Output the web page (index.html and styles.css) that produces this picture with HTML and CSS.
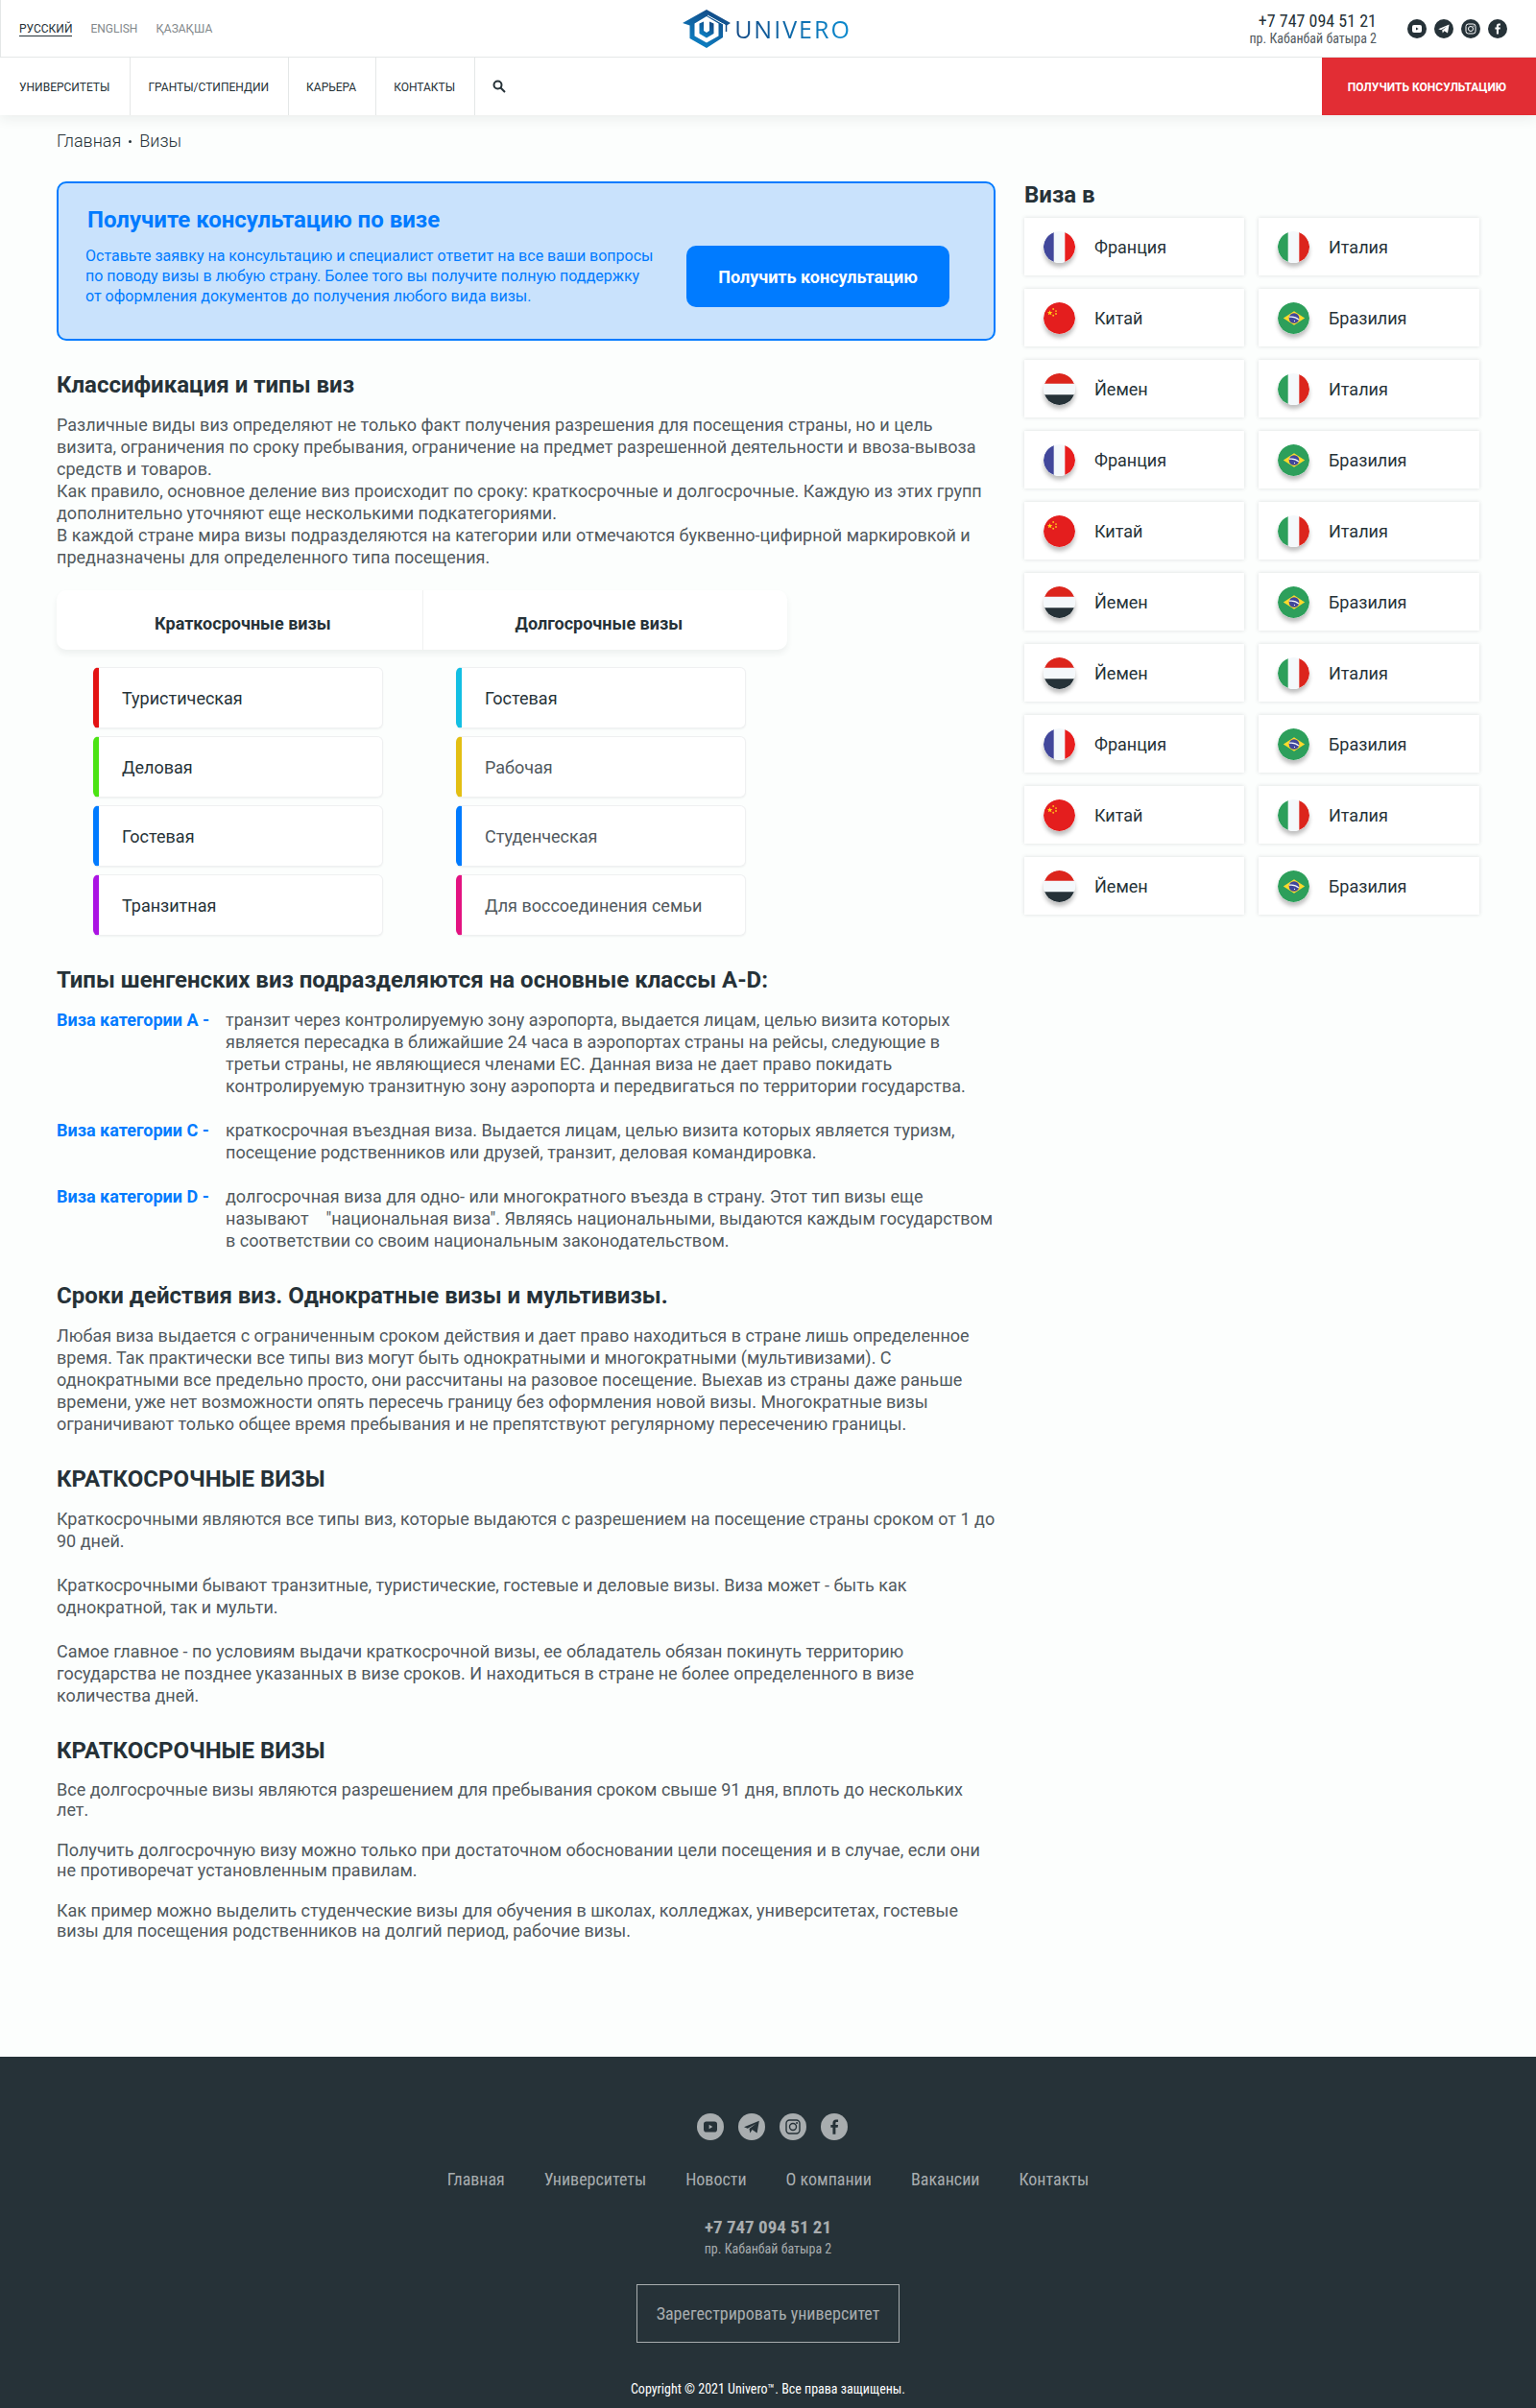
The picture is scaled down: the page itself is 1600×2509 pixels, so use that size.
FILE: index.html
```html
<!DOCTYPE html>
<html lang="ru">
<head>
<meta charset="utf-8">
<meta name="viewport" content="width=device-width, initial-scale=1">
<title>Визы — Univero</title>
<link rel="stylesheet" href="styles.css">
</head>
<body>
<svg class="defs" aria-hidden="true">
  <symbol id="youtube" viewBox="0 0 20 20"><rect x="5" y="6" width="10" height="8" rx="2"/><path class="hole" d="M9 8.4v3.2l2.7-1.6z"/></symbol>
  <symbol id="telegram" viewBox="0 0 20 20"><path d="M4.3 10.2 15.6 5.6 14 14.6 10.4 12.2 8.8 14.6 8.2 11.5 13.2 7.6 7 11.2z"/></symbol>
  <symbol id="instagram" viewBox="0 0 20 20"><rect class="line" x="5" y="5" width="10" height="10" rx="2.5"/><circle class="line" cx="10" cy="10" r="2.5"/><circle cx="12.9" cy="7.1" r=".7"/></symbol>
  <symbol id="facebook" viewBox="0 0 20 20"><path d="M8.9 15.5V10.6H7.4V8.6h1.5V7.2C8.9 5.5 9.8 4.6 11.4 4.6h1.5v1.9h-1c-.7 0-.9.3-.9.9v1.2h1.9l-.3 2H11v4.9z"/></symbol>
  <clipPath id="disc"><circle cx="17" cy="17" r="17"/></clipPath>
  <symbol id="fr" viewBox="0 0 34 34"><g clip-path="url(#disc)"><path fill="#f4f8fb" d="M0 0h34v34H0z"/><path fill="#41479b" d="M0 0h11v34H0z"/><path fill="#e81e1e" d="M23 0h11v34H23z"/></g></symbol>
  <symbol id="it" viewBox="0 0 34 34"><g clip-path="url(#disc)"><path fill="#f4f8fb" d="M0 0h34v34H0z"/><path fill="#2d9f5b" d="M0 0h11v34H0z"/><path fill="#dc251c" d="M23 0h11v34H23z"/></g></symbol>
  <symbol id="ye" viewBox="0 0 34 34"><g clip-path="url(#disc)"><path fill="#f4f8fb" d="M0 0h34v34H0z"/><path fill="#dc251c" d="M0 0h34v11H0z"/><path fill="#263238" d="M0 23h34v11H0z"/></g></symbol>
  <symbol id="cn" viewBox="0 0 34 34"><circle cx="17" cy="17" r="17" fill="#e41e1e"/><path fill="#ffd012" d="m6.800 8.400.8 1.900 2.100.1-1.600 1.300.5 2-1.800-1.100L5 13.700l.5-2-1.500-1.300 2-.1z"/><g fill="#ffb61e"><circle cx="10.500" cy="7.300" r="1"/><circle cx="13.400" cy="9.400" r="1"/><circle cx="13.400" cy="12.400" r="1"/><circle cx="10.500" cy="14.100" r="1"/></g></symbol>
  <symbol id="br" viewBox="0 0 34 34"><circle cx="17" cy="17" r="17" fill="#2d9f5b"/><path fill="#ffda2c" d="M17.500 9.500 29 17 17.500 24.500 6 17z"/><circle cx="17.500" cy="17" r="5.500" fill="#41479b"/><path fill="none" stroke="#f4f8fb" stroke-width="1.300" d="M12.300 15.700c3.700-.7 7.600.5 10.300 3"/><circle cx="18" cy="20" r=".6" fill="#fff"/></symbol>
</svg>

<header class="header">
  <div class="topbar">
    <nav class="langs" aria-label="Язык">
      <a class="lang lang-active" href="#">РУССКИЙ</a>
      <a class="lang" href="#">ENGLISH</a>
      <a class="lang" href="#">ҚАЗАҚША</a>
    </nav>
    <a class="logo" href="#" aria-label="Univero">
      <svg class="logo-mark" viewBox="0 0 50 42">
        <defs><linearGradient id="lg" x1="0" y1="1" x2=".6" y2="0"><stop offset="0" stop-color="#0a8bd0"/><stop offset="1" stop-color="#124a86"/></linearGradient></defs>
        <path fill="url(#lg)" d="M25 1 50 15 46 17.500 42 15.500V30L25 41 7.500 31V17.500L0 15zM25 8 12.500 15.500V28.500L25 35.500 37.500 28.500V15.500z"/>
        <path fill="url(#lg)" d="M17.500 15.500 22 13.500V23l3 2 3-2V13.500l4.500 2V26L25 30.500 17.500 26z"/>
        <path fill="none" stroke="#fff" stroke-width="1" d="M26 7 44 17"/>
        <path fill="none" stroke="#124a86" stroke-width="1.500" d="M45.500 16v8"/>
      </svg>
      <span class="logo-text">UNIVERO</span>
    </a>
    <div class="contacts">
      <address class="contact">
        <a class="phone" href="tel:+77470945121">+7 747 094 51 21</a>
        <span class="street">пр. Кабанбай батыра 2</span>
      </address>
      <div class="socials">
        <a class="social" href="#" aria-label="YouTube"><svg><use href="#youtube"/></svg></a>
        <a class="social" href="#" aria-label="Telegram"><svg><use href="#telegram"/></svg></a>
        <a class="social" href="#" aria-label="Instagram"><svg><use href="#instagram"/></svg></a>
        <a class="social" href="#" aria-label="Facebook"><svg><use href="#facebook"/></svg></a>
      </div>
    </div>
  </div>
  <nav class="menu" aria-label="Меню">
    <a class="menu-item" href="#">УНИВЕРСИТЕТЫ</a>
    <a class="menu-item" href="#">ГРАНТЫ/СТИПЕНДИИ</a>
    <a class="menu-item" href="#">КАРЬЕРА</a>
    <a class="menu-item" href="#">КОНТАКТЫ</a>
    <button class="search" type="button" aria-label="Поиск"><svg viewBox="0 0 14 14"><circle cx="5.500" cy="5.500" r="4" /><path d="m8.300 8.300 4.700 4.700"/></svg></button>
    <button class="menu-cta" type="button">ПОЛУЧИТЬ КОНСУЛЬТАЦИЮ</button>
  </nav>
</header>

<nav class="crumbs" aria-label="Навигация"><a href="#">Главная</a><span class="dot"></span><span>Визы</span></nav>

<div class="page">
  <main class="content">
    <section class="banner">
      <div>
        <h2 class="banner-title">Получите консультацию по визе</h2>
        <p class="banner-text">Оставьте заявку на консультацию и специалист ответит на все ваши вопросы по поводу визы в любую страну. Более того вы получите полную поддержку от оформления документов до получения любого вида визы.</p>
      </div>
      <button class="banner-btn" type="button">Получить консультацию</button>
    </section>

    <h2 class="title">Классификация и типы виз</h2>
    <div class="text">
      <p>Различные виды виз определяют не только факт получения разрешения для посещения страны, но и цель визита, ограничения по сроку пребывания, ограничение на предмет разрешенной деятельности и ввоза-вывоза средств и товаров.</p>
      <p>Как правило, основное деление виз происходит по сроку: краткосрочные и долгосрочные. Каждую из этих групп дополнительно уточняют еще несколькими подкатегориями.</p>
      <p>В каждой стране мира визы подразделяются на категории или отмечаются буквенно-цифирной маркировкой и предназначены для определенного типа посещения.</p>
    </div>

    <div class="types">
      <div class="types-head">
        <h3 class="types-title">Краткосрочные визы</h3>
        <h3 class="types-title">Долгосрочные визы</h3>
      </div>
      <div class="types-body">
        <ul class="types-list">
          <li class="type red">Туристическая</li>
          <li class="type green">Деловая</li>
          <li class="type blue">Гостевая</li>
          <li class="type purple">Транзитная</li>
        </ul>
        <ul class="types-list">
          <li class="type cyan">Гостевая</li>
          <li class="type yellow soft">Рабочая</li>
          <li class="type blue soft">Студенческая</li>
          <li class="type pink soft">Для воссоединения семьи</li>
        </ul>
      </div>
    </div>

    <h2 class="title">Типы шенгенских виз подразделяются на основные классы A-D:</h2>
    <dl class="classes">
      <dt>Виза категории A -</dt>
      <dd>транзит через контролируемую зону аэропорта, выдается лицам, целью визита которых является пересадка в ближайшие 24 часа в аэропортах страны на рейсы, следующие в третьи страны, не являющиеся членами ЕС. Данная виза не дает право покидать контролируемую транзитную зону аэропорта и передвигаться по территории государства.</dd>
      <dt>Виза категории C -</dt>
      <dd>краткосрочная въездная виза. Выдается лицам, целью визита которых является туризм, посещение родственников или друзей, транзит, деловая командировка.</dd>
      <dt>Виза категории D -</dt>
      <dd>долгосрочная виза для одно- или многократного въезда в страну. Этот тип визы еще называют &nbsp;&nbsp; "национальная виза". Являясь национальными, выдаются каждым государством в соответствии со своим национальным законодательством.</dd>
    </dl>

    <h2 class="title">Сроки действия виз. Однократные визы и мультивизы.</h2>
    <div class="text">
      <p>Любая виза выдается с ограниченным сроком действия и дает право находиться в стране лишь определенное время. Так практически все типы виз могут быть однократными и многократными (мультивизами). С однократными все предельно просто, они рассчитаны на разовое посещение. Выехав из страны даже раньше времени, уже нет возможности опять пересечь границу без оформления новой визы. Многократные визы ограничивают только общее время пребывания и не препятствуют регулярному пересечению границы.</p>
    </div>

    <h2 class="title">КРАТКОСРОЧНЫЕ ВИЗЫ</h2>
    <div class="text spaced">
      <p>Краткосрочными являются все типы виз, которые выдаются с разрешением на посещение страны сроком от 1 до 90 дней.</p>
      <p>Краткосрочными бывают транзитные, туристические, гостевые и деловые визы. Виза может - быть как однократной, так и мульти.</p>
      <p>Самое главное - по условиям выдачи краткосрочной визы, ее обладатель обязан покинуть территорию государства не позднее указанных в визе сроков. И находиться в стране не более определенного в визе количества дней.</p>
    </div>

    <h2 class="title">КРАТКОСРОЧНЫЕ ВИЗЫ</h2>
    <div class="text spaced tight">
      <p>Все долгосрочные визы являются разрешением для пребывания сроком свыше 91 дня, вплоть до нескольких лет.</p>
      <p>Получить долгосрочную визу можно только при достаточном обосновании цели посещения и в случае, если они не противоречат установленным правилам.</p>
      <p>Как пример можно выделить студенческие визы для обучения в школах, колледжах, университетах, гостевые визы для посещения родственников на долгий период, рабочие визы.</p>
    </div>
  </main>

  <aside class="aside">
    <h2 class="aside-title">Виза в</h2>
    <div class="countries">
      <a class="country" href="#"><svg class="flag"><use href="#fr"/></svg>Франция</a>
      <a class="country" href="#"><svg class="flag"><use href="#it"/></svg>Италия</a>
      <a class="country" href="#"><svg class="flag"><use href="#cn"/></svg>Китай</a>
      <a class="country" href="#"><svg class="flag"><use href="#br"/></svg>Бразилия</a>
      <a class="country" href="#"><svg class="flag"><use href="#ye"/></svg>Йемен</a>
      <a class="country" href="#"><svg class="flag"><use href="#it"/></svg>Италия</a>
      <a class="country" href="#"><svg class="flag"><use href="#fr"/></svg>Франция</a>
      <a class="country" href="#"><svg class="flag"><use href="#br"/></svg>Бразилия</a>
      <a class="country" href="#"><svg class="flag"><use href="#cn"/></svg>Китай</a>
      <a class="country" href="#"><svg class="flag"><use href="#it"/></svg>Италия</a>
      <a class="country" href="#"><svg class="flag"><use href="#ye"/></svg>Йемен</a>
      <a class="country" href="#"><svg class="flag"><use href="#br"/></svg>Бразилия</a>
      <a class="country" href="#"><svg class="flag"><use href="#ye"/></svg>Йемен</a>
      <a class="country" href="#"><svg class="flag"><use href="#it"/></svg>Италия</a>
      <a class="country" href="#"><svg class="flag"><use href="#fr"/></svg>Франция</a>
      <a class="country" href="#"><svg class="flag"><use href="#br"/></svg>Бразилия</a>
      <a class="country" href="#"><svg class="flag"><use href="#cn"/></svg>Китай</a>
      <a class="country" href="#"><svg class="flag"><use href="#it"/></svg>Италия</a>
      <a class="country" href="#"><svg class="flag"><use href="#ye"/></svg>Йемен</a>
      <a class="country" href="#"><svg class="flag"><use href="#br"/></svg>Бразилия</a>
    </div>
  </aside>
</div>

<footer class="footer">
  <div class="socials socials-footer">
    <a class="social" href="#" aria-label="YouTube"><svg><use href="#youtube"/></svg></a>
    <a class="social" href="#" aria-label="Telegram"><svg><use href="#telegram"/></svg></a>
    <a class="social" href="#" aria-label="Instagram"><svg><use href="#instagram"/></svg></a>
    <a class="social" href="#" aria-label="Facebook"><svg><use href="#facebook"/></svg></a>
  </div>
  <nav class="footer-nav" aria-label="Нижнее меню">
    <a href="#">Главная</a>
    <a href="#">Университеты</a>
    <a href="#">Новости</a>
    <a href="#">О компании</a>
    <a href="#">Вакансии</a>
    <a href="#">Контакты</a>
  </nav>
  <address class="footer-contact">
    <a class="footer-phone" href="tel:+77470945121">+7 747 094 51 21</a>
    <span class="footer-street">пр. Кабанбай батыра 2</span>
  </address>
  <button class="register" type="button">Зарегестрировать университет</button>
  <p class="copyright">Copyright © 2021 Univero™. Все права защищены.</p>
</footer>
</body>
</html>
```
FILE: styles.css
```css
* { box-sizing: border-box; }
body, h2, h3, p, ul, dl, dd { margin: 0; padding: 0; }
body {
  background: #fcfefd;
  color: #263238;
  font-family: Roboto, sans-serif;
  font-size: 18px;
}
a { color: inherit; text-decoration: none; }
button { border: 0; background: none; font: inherit; color: inherit; padding: 0; cursor: pointer; }
ul { list-style: none; }
address { font-style: normal; }
.defs { position: absolute; width: 0; height: 0; }

/* Header */
.header { position: relative; background: #fff; box-shadow: 0 4px 12px rgba(38, 50, 56, .08); }
.topbar {
  display: grid;
  grid-template-columns: 1fr auto 1fr;
  align-items: center;
  height: 60px;
  padding: 0 30px 0 19px;
  border-left: 1px solid #e4e7e7;
  border-bottom: 1px solid #e4e7e7;
}
.langs { display: flex; gap: 19px; padding-top: 2px; font-size: 12px; line-height: 14px; }
.lang { color: #82888b; border-bottom: 1px solid transparent; }
.lang-active { color: #263238; border-color: #263238; }
.logo { display: flex; align-items: center; gap: 4px; padding-left: 8px; }
.logo-mark { width: 50px; height: 42px; }
.logo-text {
  font-family: "Open Sans", sans-serif;
  font-size: 25px;
  line-height: 30px;
  letter-spacing: 2px;
  background: linear-gradient(90deg, #124a86, #0a8bd0);
  background-clip: text;
  color: transparent;
}
.contacts { display: flex; justify-content: flex-end; align-items: center; gap: 32px; }
.contact { display: flex; flex-direction: column; text-align: right; font-family: "Roboto Condensed", Roboto, sans-serif; }
.phone { font-size: 18px; line-height: 21px; }
.street { font-size: 14px; line-height: 16px; color: #51595e; }
.socials { display: flex; gap: 8px; --disc: #263238; --ink: #fff; }
.social { display: flex; width: 20px; height: 20px; border-radius: 50%; background: var(--disc); }
.social svg { width: 100%; height: 100%; fill: var(--ink); }
.hole { fill: var(--disc); }
.line { fill: none; stroke: var(--ink); stroke-width: 1; }

.menu { display: flex; height: 60px; font-size: 12px; }
.menu-item { display: flex; align-items: center; padding: 2px 20px 0 18px; border-right: 1px solid #e4e7e7; }
.menu-item:first-child { padding-left: 20px; padding-right: 21px; }
.search { width: 50px; display: flex; align-items: center; justify-content: center; }
.search svg { width: 14px; height: 14px; fill: none; stroke: #263238; stroke-width: 2; }
.menu-cta { width: 223px; margin-left: auto; padding: 2px 4px 0 0; background: #e22d34; color: #fff; font-weight: 700; }

.crumbs { display: flex; align-items: center; gap: 8px; padding: 16px 59px 0; line-height: 22px; font-weight: 300; }
.dot { width: 3px; height: 3px; border-radius: 50%; background: #263238; }

/* Page */
.page { display: grid; grid-template-columns: minmax(0, 978px) minmax(0, 476px); gap: 30px; padding: 31px 0 121px 59px; }
.banner {
  display: flex;
  align-items: flex-start;
  gap: 20px;
  padding: 24px 46px 33px 28px;
  border: 2px solid #007bff;
  border-radius: 10px;
  background: #c9e2fc;
  color: #007bff;
}
.banner-title { font-size: 24px; line-height: 28px; font-weight: 700; padding-left: 2px; }
.banner-text { width: 594px; margin-top: 13px; font-size: 16px; line-height: 21px; }
.banner-btn { width: 274px; height: 64px; margin: 41px 0 0 auto; flex: none; border-radius: 10px; background: #007bff; color: #fff; font-weight: 700; }

.title { margin: 31px 0 15px; font-size: 24px; line-height: 30px; font-weight: 700; }
.text, .classes { color: #51595e; line-height: 23px; }
.spaced { display: grid; gap: 23px; }
.tight { line-height: 21px; gap: 21px; }

.types { width: 761px; margin-top: 23px; }
.types-head { display: grid; grid-template-columns: 1fr 1fr; background: #fff; border-radius: 10px; box-shadow: 0 4px 6px rgba(38, 50, 56, .07); }
.types-title { padding: 24px 0 16px 102px; font-size: 18px; line-height: 22px; font-weight: 700; }
.types-title + .types-title { padding-left: 96px; border-left: 1px solid #f0f1f1; }
.types-body { display: grid; grid-template-columns: 378px 1fr; padding-top: 18px; }
.types-list { display: grid; gap: 8px; padding-left: 38px; }
.type {
  display: flex;
  align-items: center;
  width: 302px;
  height: 64px;
  padding-left: 24px;
  border: 1px solid #eff0f1;
  border-left: 6px solid var(--mark);
  border-radius: 6px;
  background: #fff;
  box-shadow: 0 1px 2px rgba(38, 50, 56, .06);
}
.soft { color: #51595e; }
.red { --mark: #e31313; }
.green { --mark: #4be313; }
.blue { --mark: #007bff; }
.purple { --mark: #ab13e3; }
.cyan { --mark: #13bfe3; }
.yellow { --mark: #e3bf13; }
.pink { --mark: #e31381; }

.classes { display: grid; grid-template-columns: 176px 1fr; row-gap: 23px; }
.classes dt { color: #007bff; font-weight: 700; }

/* Countries */
.aside-title { font-size: 24px; line-height: 28px; font-weight: 700; }
.countries { display: grid; grid-template-columns: 229px 230px; gap: 14px 15px; margin-top: 10px; }
.country { display: flex; align-items: center; gap: 20px; height: 60px; padding-left: 20px; background: #fff; box-shadow: 0 0 4px rgba(38, 50, 56, .16); }
.flag { width: 33px; height: 33px; border-radius: 50%; box-shadow: 0 4px 4px rgba(0, 0, 0, .25); }
.flag use { width: 33px; height: 33px; }

/* Footer */
.footer {
  display: flex;
  flex-direction: column;
  align-items: center;
  padding: 59px 0 11px;
  background: #263238;
  color: #a8adaf;
  font-family: "Roboto Condensed", Roboto, sans-serif;
}
.socials-footer { gap: 15px; --disc: #a8adaf; --ink: #263238; padding-left: 9px; }
.socials-footer .social { width: 28px; height: 28px; }
.footer-nav { display: flex; gap: 41px; margin-top: 30px; line-height: 22px; }
.footer-contact { display: flex; flex-direction: column; align-items: center; margin-top: 28px; }
.footer-phone { font-size: 19px; font-weight: 700; line-height: 22px; }
.footer-street { font-size: 14px; line-height: 22px; }
.register { width: 274px; height: 61px; margin-top: 26px; border: 1px solid #a8adaf; }
.copyright { margin-top: 39px; font-size: 14px; line-height: 18px; color: #fff; }
```
